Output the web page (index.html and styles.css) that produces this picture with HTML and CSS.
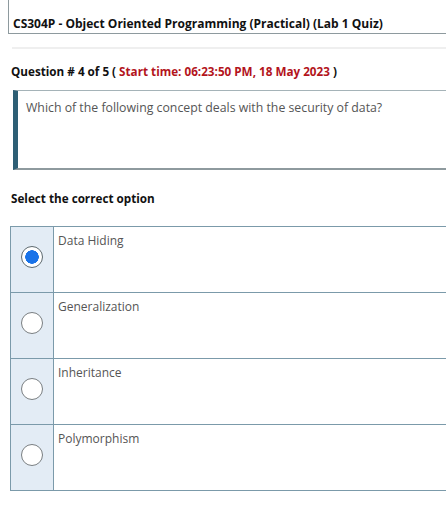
FILE: index.html
```html
<!DOCTYPE html>
<html>
<head>
<meta charset="utf-8">
<link rel="stylesheet" href="styles.css">
</head>
<body>
<div class="page">
  <div class="header"><span class="title">CS304P - Object Oriented Programming (Practical) (Lab 1 Quiz)</span></div>
  <div class="sep"></div>
  <div class="qline">Question # 4 of 5 ( <span class="time">Start time: 06:23:50 PM, 18 May 2023</span> )</div>
  <div class="qbox">Which of the following concept deals with the security of data?</div>
  <div class="select">Select the correct option</div>
  <div class="options">
    <div class="opt">
      <div class="radiocell"><span class="radio checked"></span></div>
      <div class="label">Data Hiding</div>
    </div>
    <div class="opt">
      <div class="radiocell"><span class="radio"></span></div>
      <div class="label">Generalization</div>
    </div>
    <div class="opt">
      <div class="radiocell"><span class="radio"></span></div>
      <div class="label">Inheritance</div>
    </div>
    <div class="opt">
      <div class="radiocell"><span class="radio"></span></div>
      <div class="label">Polymorphism</div>
    </div>
  </div>
</div>
</body>
</html>
```
FILE: styles.css
```css
html, body {
  margin: 0;
  padding: 0;
  background: #fff;
}
.page {
  width: 446px;
  height: 520px;
  overflow: hidden;
  font-family: "Open Sans", "Liberation Sans", sans-serif;
  color: #111;
}
.header {
  margin-left: 8px;
  height: 34px;
  border-left: 1px solid #8e9a9e;
  border-bottom: 1px solid #8e9a9e;
  box-sizing: border-box;
  padding-top: 11px;
  padding-left: 4px;
}
.title {
  font-weight: 700;
  font-size: 12px;
  line-height: 16px;
  color: #111;
}
.sep {
  margin-top: 13px;
  margin-left: 12px;
  height: 2px;
  background: #efefef;
}
.qline {
  margin-top: 14px;
  margin-left: 11px;
  font-weight: 700;
  font-size: 11.7px;
  line-height: 16px;
}
.time {
  color: #b3141c;
}
.qbox {
  margin-top: 11px;
  margin-left: 13px;
  height: 80px;
  box-sizing: border-box;
  border-top: 1px solid #a5b3b8;
  border-left: 5px solid #2e5f75;
  border-bottom: 2px solid #8e9a9e;
  padding: 9px 0 0 8px;
  font-size: 12.3px;
  line-height: 16px;
  color: #555;
}
.select {
  margin-top: 20px;
  margin-left: 11px;
  font-weight: 700;
  font-size: 11.7px;
  line-height: 16px;
}
.options {
  margin-top: 20px;
  margin-left: 10px;
  border: 1px solid #7b9aaa;
  border-right: none;
}
.opt {
  display: flex;
  height: 66px;
  border-bottom: 1px solid #7b9aaa;
  box-sizing: border-box;
}
.opt:last-child {
  border-bottom: none;
  height: 65px;
}
.radiocell {
  width: 43px;
  flex: none;
  background: #e3ecf5;
  border-right: 1px solid #7b9aaa;
  display: flex;
  justify-content: center;
  padding-top: 19px;
  box-sizing: border-box;
}
.radio {
  width: 22px;
  height: 22px;
  border-radius: 50%;
  border: 1px solid #7a7f82;
  background: #fff;
  box-sizing: border-box;
  display: block;
}
.radio.checked {
  border: 1px solid #5f6b70;
  background: radial-gradient(circle, #1a73e8 0 6.5px, #fff 7px);
}
.label {
  padding: 6px 0 0 4px;
  font-size: 12px;
  line-height: 16px;
  color: #555;
}
```
